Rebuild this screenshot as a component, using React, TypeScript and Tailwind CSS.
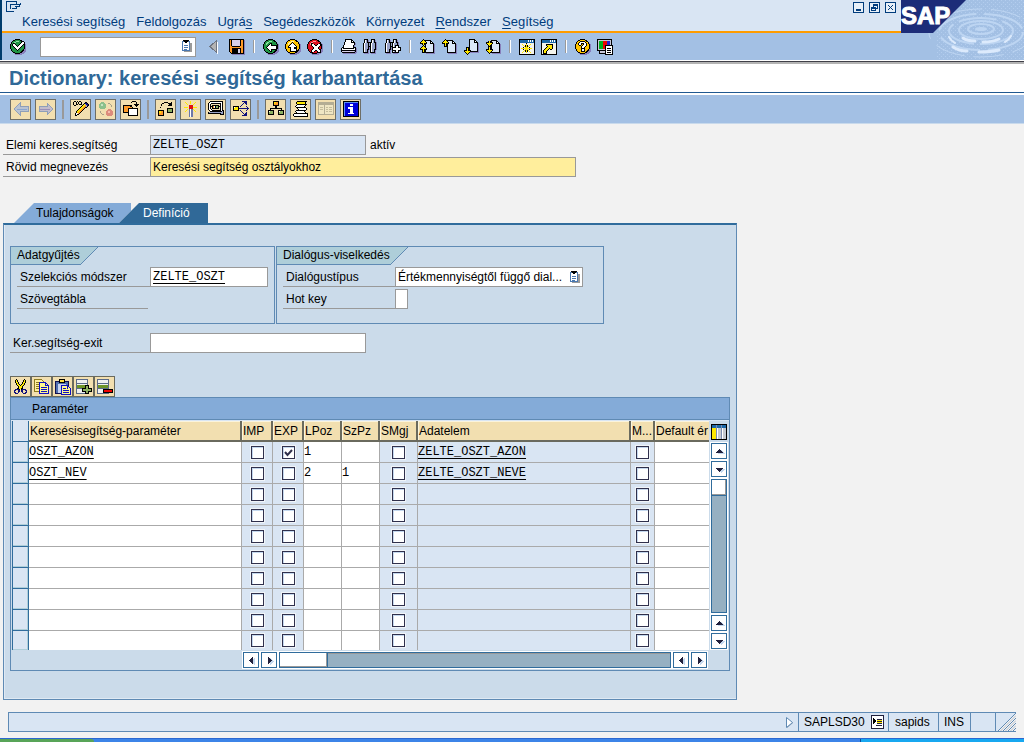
import React from 'react';
import { clsx } from 'clsx';

type IconProps = { children: React.ReactNode; size?: number };

const Icon = ({ children, size = 16 }: IconProps) => (
  <svg
    width={size}
    height={size}
    viewBox={`0 0 ${size} ${size}`}
    shapeRendering="crispEdges"
    fill="none"
    className="block shrink-0 overflow-visible"
    aria-hidden="true"
  >
    {children}
  </svg>
);

// one letter per pixel colour in the bitmaps below
const palette: Record<string, string> = {
  k: '#000000',
  w: '#ffffff',
  y: '#ffe800',
  o: '#ff9a28',
  g: '#8cb060',
  b: '#dce8f8',
  v: '#98a2c8',
  l: '#d8d0ea',
  p: '#8880bc',
  n: '#10107c',
};

const Pixels = ({ rows, x = 0, y = 0 }: { rows: string[]; x?: number; y?: number }) => (
  <>
    {rows.flatMap((row, r) =>
      [...row.matchAll(/([a-z])\1*/g)].map((run) => (
        <rect
          key={`${r}-${run.index}`}
          x={x + run.index}
          y={y + r}
          width={run[0].length}
          height={1}
          fill={palette[run[1]]}
        />
      )),
    )}
  </>
);

// Round glossy ball used by the enter / back / exit / cancel / help icons
const Ball = ({ fill, shine, children }: { fill: string; shine: string; children: React.ReactNode }) => (
  <Icon>
    <circle cx="9" cy="9" r="7.5" fill="#8880bc" />
    <circle cx="7.5" cy="7.5" r="7" fill={fill} stroke="#000" />
    <path d="M3 6V4h1V3h2V2h3v1H6v1H5v1H4v1z" fill={shine} />
    {children}
  </Icon>
);

const pageRows = [
  '......kkkkkk....',
  '......kbbbbkk...',
  '......kbbbbkwk..',
  '......kbbbbkkkk.',
  '......kbbbbbbbkp',
  '......kbbbbbbbkp',
  '......kbbbbbbbkp',
  '......kbbbbbbbkp',
  '......kbbbbbbbkp',
  '......kbbbbbbbkp',
  '......kbbbbbbbkp',
  '......kbbbbbbbkp',
  '......kkkkkkkkkp',
  '.......ppppppppp',
];

const upRows = ['...k...', '..kyk..', '.kyyyk.', 'kyyyyyk', 'kkkykkk', '..kyk..', '..kyk..', '..kkk..'];
const downRows = [...upRows].reverse();

const binocularRows = [
  '.kkkk...kkkk....',
  '.kwvkp..kwvkp...',
  '.kwvkp..kwvkp...',
  '.kwvkkkkkwvkkp..',
  'kwvvvkvkwvvvkp..',
  'kwvvvkvkwvvvkp..',
  'kwvvvkvkwvvvkp..',
  'kwvvvkkkwvvvkp..',
  'kwvvvkpkwvvvkp..',
  'kwvvvkpkwvvvkp..',
  'kwvvkkpkwvvkkp..',
  'kwvvkp.kwvvkp...',
  'kwvvkp.kwvvkp...',
  'kkkkkp.kkkkkp...',
  '.ppppp..ppppp...',
];

const Clipboard = () => (
  <svg width="10" height="12" viewBox="0 0 10 12" shapeRendering="crispEdges" className="block" aria-hidden="true">
    <path d="M2 3h8v9H2z" fill="#9a9a9a" />
    <path d="M.5 1.500h7v9h-7z" fill="#fff" stroke="#4a78b0" />
    <path d="M2 5h4v1H2zM2 7h4v1H2zM2 9h3v1H2z" fill="#4a78b0" />
    <path d="M1 0h6v1H6v1H5v1H3V2H2V1H1z" fill="#000" />
  </svg>
);

const ModeWindow = () => (
  <>
    <path d="M.5.5h15v15H.5z" fill="#f4f4ec" stroke="#000" />
    <path d="M1 1h14v3H1z" fill="#1c68a8" />
    <path d="M9 1h1v2H9zM11 1h1v2h-1zM13 1h1v2h-1z" fill="#fff" />
  </>
);

const icons = {
  enter: (
    <Ball fill="#1f9444" shine="#8be0a0">
      <Pixels
        x={2}
        y={2}
        rows={[
          '..........kk.',
          '.........kwwk',
          '.kk.....kwwwk',
          'kwwk...kwwwk.',
          'kwwwk.kwwwk..',
          '.kwwwkwwwk...',
          '..kwwwwwk....',
          '...kwwwk.....',
          '....kwk......',
          '.....k.......',
        ]}
      />
    </Ball>
  ),
  hideCommand: (
    <Icon>
      <path d="M13 2v13h-1V3z" fill="#fff" />
      <path d="M11.500 1.500v12L5 7.500z" fill="#b4b4b4" stroke="#6e7480" />
    </Icon>
  ),
  save: (
    <Icon>
      <Pixels
        rows={[
          'kkkkkkkkkkkkkkk.',
          'kokllllllllkookp',
          'kokllllllllkookp',
          'kokllllllllkookp',
          'kokllllllllkookp',
          'kokllllllllkookp',
          'kokllllllllkookp',
          'kookkkkkkkkoookp',
          'koooooooooooookp',
          'kookkkkkkkkkookp',
          'kookkkkkkllkookp',
          'kookkkkkkllkookp',
          'kookkkkkkllkookp',
          '.kokkkkkkllkookp',
          '..kkkkkkkkkkkkkp',
          '...ppppppppppppp',
        ]}
      />
    </Icon>
  ),
  back: (
    <Ball fill="#1f9444" shine="#8be0a0">
      <Pixels
        x={3}
        y={4}
        rows={[
          '....kk.......',
          '...kwk.......',
          '..kwwkkkkkk..',
          '.kwwwwwwwwk..',
          'kwwwwwwwwwk..',
          '.kwwwwwwwwk..',
          '..kwwkkkkkk..',
          '...kwk.......',
          '....kk.......',
        ]}
      />
    </Ball>
  ),
  exit: (
    <Ball fill="#ffc400" shine="#fff4a0">
      <Pixels
        x={3}
        y={3}
        rows={[
          '....k....',
          '...kwk...',
          '..kwwwk..',
          '.kwwwwwk.',
          'kwwwwwwwk',
          'kkkwwwkkk',
          '..kwwwkkk',
          '..kwwwwwk',
          '..kwwwwwk',
          '..kkkkkkk',
        ]}
      />
    </Ball>
  ),
  cancel: (
    <Ball fill="#e01020" shine="#ff9090">
      <Pixels
        x={4}
        y={4}
        rows={[
          'kk......kk',
          'kwwk..kwwk',
          'kwwwkkwwwk',
          '.kwwwwwwk.',
          '..kwwwwk..',
          '..kwwwwk..',
          '.kwwwwwwk.',
          'kwwwkkwwwk',
          'kwwk..kwwk',
          'kk......kk',
        ]}
      />
    </Ball>
  ),
  print: (
    <Icon>
      <Pixels
        rows={[
          '....kkkkkkk.....',
          '....kwwwwwkk....',
          '....kwwwwwkwk...',
          '...kwwwwwwkkkk..',
          '...kwwwwwwwwwkp.',
          '...kwwwwwwwwwkp.',
          '..kwwwwwwwwwkp..',
          '..kwwwwwwwwwkp..',
          '.kkwwwwwwwwwkkk.',
          'kbkkkkkkkkkkkbkp',
          'kwwwwwwwwwwwwwkp',
          'kkkkkkkkkkkkkkkp',
          'kllllllllllllvkp',
          '.kkkkkkkkkkkkkpp',
          '..ppppppppppppp.',
        ]}
      />
    </Icon>
  ),
  find: (
    <Icon>
      <Pixels rows={binocularRows} />
    </Icon>
  ),
  findNext: (
    <Icon>
      <Pixels rows={binocularRows} />
      <Pixels
        x={7}
        y={6}
        rows={['...kkkk..', '...kwwk..', 'kkkkwwkkk', 'kwwwwwwwk', 'kwwwwwwwk', 'kkkkwwkkk', '...kwwk..', '...kkkk..']}
      />
    </Icon>
  ),
  firstPage: (
    <Icon>
      <Pixels rows={pageRows} y={1} />
      <Pixels rows={upRows.slice(0, 6)} x={1} />
      <Pixels rows={upRows} x={1} y={6} />
    </Icon>
  ),
  prevPage: (
    <Icon>
      <Pixels rows={pageRows} y={1} />
      <Pixels rows={upRows} x={1} />
    </Icon>
  ),
  nextPage: (
    <Icon>
      <Pixels rows={pageRows} />
      <Pixels rows={downRows} x={1} y={8} />
    </Icon>
  ),
  lastPage: (
    <Icon>
      <Pixels rows={pageRows} y={1} />
      <Pixels rows={downRows.slice(2)} x={1} y={2} />
      <Pixels rows={downRows} x={1} y={7} />
    </Icon>
  ),
  newMode: (
    <Icon>
      <ModeWindow />
      <Pixels
        x={2}
        y={4}
        rows={[
          '.....k.....',
          '.y...y...y.',
          '..y.kyk.y..',
          '...ykyky...',
          '..k.yyy.k..',
          'yyyyyyyyyyy',
          '..k.yyy.k..',
          '...ykyky...',
          '..y.kyk.y..',
          '.y...y...y.',
        ]}
      />
    </Icon>
  ),
  shortcut: (
    <Icon>
      <ModeWindow />
      <Pixels
        x={1}
        y={5}
        rows={[
          '....kkkkkkk.',
          '....kyyyyyk.',
          '.....kyyyyk.',
          '....kyyyyyk.',
          '...kyyykyyk.',
          '..kyyyk.kk..',
          '.kyyyk......',
          '.kyyk.......',
          '.kyyk.......',
          '.kkkk.......',
        ]}
      />
    </Icon>
  ),
  help: (
    <Ball fill="#ffc400" shine="#fff4a0">
      <Pixels
        x={3}
        y={2}
        rows={[
          '..kkkkk..',
          '.kwwwwwk.',
          'kwwkkkwwk',
          'kwwk.kwwk',
          '.kk.kwwwk',
          '...kwwwk.',
          '...kwwk..',
          '...kkkk..',
          '...kwwk..',
          '...kwwk..',
          '...kkkk..',
        ]}
      />
    </Ball>
  ),
  layout: (
    <Icon>
      <path d="M.5.5h14v11H.5z" fill="#c8c8d8" stroke="#000" />
      <path d="M2 2h4v8H2z" fill="#00b020" />
      <path d="M6 2h4v8H6z" fill="#f00000" />
      <path d="M10 2h3v8h-3z" fill="#2020d0" />
      <path d="M2.500 11.500h8v3h-8z" fill="#c8c8d8" stroke="#000" />
      <path d="M8.500 6.500h7v9h-7z" fill="#fff" stroke="#000" />
      <path d="M10 9h4v1h-4zM10 11h4v1h-4zM10 13h4v1h-4z" fill="#000" />
    </Icon>
  ),
  left: (
    <Icon>
      <path d="M1 8l6-6v3h8v5H7v4z" fill="#b9c3d2" stroke="#8f9fb8" />
      <path d="M4 8.500h10" stroke="#8aa6d0" />
    </Icon>
  ),
  right: (
    <Icon>
      <path d="M15 8L9 2v3H1v5h8v4z" fill="#c3bccb" stroke="#8f9fb8" />
      <path d="M2 8.500h10" stroke="#9a8fb8" />
    </Icon>
  ),
  toggle: (
    <Icon>
      <Pixels
        rows={[
          '.kk.k.kk........',
          'k..k.k..k...kk..',
          'k..k.k..k..knnk.',
          'k..kk.kkk.kyvnnk',
          '.kk......kyyovnk',
          '........kyyoovk.',
          '.......kyyookk..',
          '......kyyook....',
          '.....kyyook.....',
          '....kyyook......',
          '...kyyook.......',
          '...kyook........',
          '..kwwok.........',
          '..kwkk..........',
          '..kk............',
        ]}
      />
    </Icon>
  ),
  activeInactive: (
    <Icon>
      <circle cx="4.500" cy="4.500" r="3.500" fill="#8cc08c" />
      <circle cx="11.500" cy="11.500" r="3.500" fill="#dc8c7c" />
      <path d="M2 10h1v2H2zM3 12h1v1H3zM4 13h2v1H4zM10 2h2v1h-2zM12 3h1v1h-1zM13 4h1v2h-1z" fill="#a8a088" />
      <path d="M3 3h2v2H3z" fill="#c4e4c0" />
      <path d="M10 10h2v2h-2z" fill="#f4bcac" />
    </Icon>
  ),
  otherObject: (
    <Icon>
      <Pixels
        rows={[
          '.........kkkk...',
          '........k....k..',
          '.............k..',
          '...........kkkkk',
          'kkkkkkkkk...kkk.',
          'kooooookk....k..',
          'kooooooook......',
          'kooookkkkkkkkkk.',
          'kooookwwwwwwwwk.',
          'kooookwwwwwwwwk.',
          'kooookwwwwwwwwk.',
          'kkkkkkwwwwwwwwk.',
          '.....kwwwwwwwwk.',
          '.....kwwwwwwwwk.',
          '.....kkkkkkkkkk.',
        ]}
      />
    </Icon>
  ),
  check: (
    <Icon>
      <Pixels
        y={1}
        rows={[
          '......kkkk...k..',
          '....kk....kkkk..',
          '...k.......kkk..',
          '...k......kkkk..',
          '................',
          '..k.............',
          '.........kkkkkk.',
          '.........kggggk.',
          'kkkkkk...kggggk.',
          'kyyook...kggggk.',
          'kyyook...kkkkkk.',
          'kooook..........',
          'kooook..........',
          'kkkkkk..........',
        ]}
      />
    </Icon>
  ),
  activate: (
    <Icon>
      <Pixels
        rows={[
          '.......y........',
          '..y....y....y...',
          '...y...y...y....',
          '....y.....y.....',
          '................',
          '................',
          '.yyyy.....yyyy..',
          '................',
          '....y.....y.....',
          '...y.......y....',
          '..y.........y...',
        ]}
      />
      <path d="M6 4h4v4H6z" fill="#e01010" />
      <path d="M6 8h4v8H6z" fill="#6c78a8" />
      <path d="M7 8h1v8H7z" fill="#fff" />
    </Icon>
  ),
  whereUsed: (
    <Icon>
      <Pixels
        rows={[
          '..kkkkkkkkkkkkk.',
          '.kwwwwwwwwwwwwk.',
          'kwwkkkkkkkkkkwk.',
          'kwk.........kwk.',
          'kwk.kkkkkkk.kwk.',
          'kwkkkowkggkkkwk.',
          'kwk.kowkggk.kwk.',
          'kwk.kkkkkkk.kwk.',
          'kwwk........kwk.',
          '.kwwkkkkkkkkkwkk',
          '..kkkkkkkkkkkkvk',
          'kvvvvvvvvvvvvvvk',
          'kkkkkkkkkkkkkvvk',
          '............kkkk',
        ]}
      />
    </Icon>
  ),
  display: (
    <Icon>
      <Pixels
        rows={[
          '.........nnnnn..',
          '...........nnn..',
          '..........n.nn..',
          '.........n...n..',
          '........n.......',
          'kkkkkk.n.....n..',
          'kwyyyk........n.',
          'kyyyyknnnnnnnnnn',
          'kyyyyk........n.',
          'kkkkkk.n.....n..',
          '........n.......',
          '.........n...n..',
          '..........n.nn..',
          '...........nnn..',
          '.........nnnnn..',
        ]}
      />
    </Icon>
  ),
  hierarchy: (
    <Icon>
      <Pixels
        rows={[
          '.....kkkkkk.....',
          '.....kyyook.....',
          '.....kyoook.....',
          '.....kooook.....',
          '.....kkkkkk.....',
          '.......kk.......',
          '.......kk.......',
          '..kkkkkkkkkkkk..',
          '..k..........k..',
          'kkkkkk....kkkkkk',
          'kwgggk....kwgggk',
          'kggggk....kggggk',
          'kggggk....kggggk',
          'kkkkkk....kkkkkk',
        ]}
      />
    </Icon>
  ),
  objectList: (
    <Icon>
      <Pixels
        rows={[
          '....kkkkkkkkkk..',
          '...kyyyyyyyyk...',
          '...kyyyyyyyyk...',
          '....kkkkkkkkkk..',
          '...kwwwwwwwwk...',
          '..kwwwwwwwwk....',
          '...kkkkkkkkkk...',
          '....kwwwwwwwwk..',
          '.....kwwwwwwwk..',
          '...kkkkkkkkkk...',
          '..kwwwwwwwwk....',
          '...kwwwwwwwwk...',
          '.kkkkkkkkkkkkkk.',
          'kwwwwwwwwwwwwwk.',
          'kwwwwwwwwwwwwwk.',
          '.kkkkkkkkkkkkkk.',
        ]}
      />
    </Icon>
  ),
  documentation: (
    <Icon>
      <path d="M.5 1.500h15v12H.5z" fill="#efe6c4" stroke="#b4ad94" />
      <path d="M1 2h14v2H1zM6 4h1v9H6z" fill="#b4ad94" />
      <path d="M2 6h3v1H2zM2 8h3v1H2zM8 6h2v1H8zM8 8h2v1H8zM8 10h2v1H8zM11 6h3v1h-3zM11 8h3v1h-3zM11 10h3v1h-3z" fill="#c4bc9c" />
    </Icon>
  ),
  info: (
    <Icon>
      <path d="M.5.5h15v15H.5z" fill="#0000d8" stroke="#000" />
      <path d="M1 1h14v1H1zM1 1h1v14H1z" fill="#6090f0" />
      <path d="M7 3h3v2H7zM5 6h5v6h1v1H5v-1h2V8H5z" fill="#fff" />
    </Icon>
  ),
  cut: (
    <Icon>
      <Pixels
        x={1}
        rows={[
          '..k.......k..',
          '.kyk.....kyk.',
          '.kyk.....kyk.',
          '.kyyk...kyyk.',
          '..kyk...kyk..',
          '..kyyk.kyyk..',
          '...kyykyyk...',
          '....kyyyk....',
          '....kyyyk....',
          '...kkyykk....',
          '.nnnnk.knnnn.',
          'nn..nn.nn..nn',
          'n...nn.nn...n',
          'nn..n...n..nn',
          '.nnn.....nnn.',
        ]}
      />
    </Icon>
  ),
  copy: (
    <Icon>
      <path d="M.5.5h7l2 2v10h-9z" fill="#fff0a0" stroke="#8c7a20" />
      <path d="M2 3h4v1H2zM2 5h3v1H2zM2 7h3v1H2zM2 9h3v1H2z" fill="#8c7a20" />
      <path d="M5.500 3.500h6l3 3v8h-9z" fill="#fff890" stroke="#1010c0" />
      <path d="M11 3h1v4h-1zM12 6h3v1h-3zM7 8h6v1H7zM7 10h6v1H7zM7 12h6v1H7z" fill="#1010c0" />
    </Icon>
  ),
  paste: (
    <Icon>
      <path d="M.5 2.500h13v12H.5z" fill="#5070b0" stroke="#101050" />
      <path d="M4.500.5h5v3h-5z" fill="#ffe040" stroke="#000" />
      <path d="M3 5h8v9H3z" fill="#c8d4f0" />
      <path d="M6.500 6.500h6l3 3v6h-9z" fill="#fff890" stroke="#1010c0" />
      <path d="M12 7h1v3h-1zM8 9h3v1H8zM8 11h6v1H8zM8 13h6v1H8z" fill="#1010c0" />
    </Icon>
  ),
  insertRow: (
    <Icon>
      <path d="M.5.5h11v4H.5zM.5 4.500h11v5H.5zM.5 9.500h11v5H.5z" fill="#f0f0f0" stroke="#5a6a88" />
      <path d="M1 6h10v3H1z" fill="#6c9428" />
      <Pixels
        x={6}
        y={6}
        rows={['...kkkk...', '...kggk...', '...kggk...', 'kkkkggkkkk', 'kggggggggk', 'kggggggggk', 'kkkkggkkkk', '...kggk...', '...kkkk...']}
      />
    </Icon>
  ),
  deleteRow: (
    <Icon>
      <path d="M.5.5h11v4H.5zM.5 4.500h11v5H.5zM.5 9.500h11v5H.5z" fill="#f0f0f0" stroke="#5a6a88" />
      <path d="M1 6h10v3H1z" fill="#6c9428" />
      <path d="M6.500 10.500h9v3h-9z" fill="#f00000" stroke="#000" />
    </Icon>
  ),
};

type IconName = keyof typeof icons;
type Tool = [IconName, string];

const menuItems: [string, string, string][] = [
  ['Keresési segítség', '', ''],
  ['Feldolgozás', '', ''],
  ['Ugrá', 's', ''],
  ['Segédeszközök', '', ''],
  ['Környezet', '', ''],
  ['', 'R', 'endszer'],
  ['', 'S', 'egítség'],
];

const systemTools: Tool[][] = [
  [['save', 'Mentés']],
  [['back', 'Vissza'], ['exit', 'Kilépés'], ['cancel', 'Megszakítás']],
  [['print', 'Nyomtatás'], ['find', 'Keresés'], ['findNext', 'Tovább keresés']],
  [['firstPage', 'Első oldal'], ['prevPage', 'Előző oldal'], ['nextPage', 'Következő oldal'], ['lastPage', 'Utolsó oldal']],
  [['newMode', 'Új mód'], ['shortcut', 'Parancsikon']],
  [['help', 'Súgó'], ['layout', 'Elrendezés']],
];

const appTools: Tool[][] = [
  [['left', 'Előző objektum'], ['right', 'Következő objektum']],
  [['toggle', 'Kijelzés/módosítás'], ['activeInactive', 'Aktív/inaktív'], ['otherObject', 'Másik objektum']],
  [['check', 'Ellenőrzés'], ['activate', 'Aktiválás'], ['whereUsed', 'Hol használt'], ['display', 'Teszt']],
  [['hierarchy', 'Hierarchia'], ['objectList', 'Objektumlista'], ['documentation', 'Dokumentáció'], ['info', 'Információ']],
];

const tableTools: Tool[] = [
  ['cut', 'Kivágás'],
  ['copy', 'Másolás'],
  ['paste', 'Beillesztés'],
  ['insertRow', 'Sor beszúrása'],
  ['deleteRow', 'Sor törlése'],
];

type Row = { name: string; exp: boolean; lpoz: string; szpz: string; element: string };

const emptyRow: Row = { name: '', exp: false, lpoz: '', szpz: '', element: '' };

const rows: Row[] = [
  { name: 'OSZT_AZON', exp: true, lpoz: '1', szpz: '', element: 'ZELTE_OSZT_AZON' },
  { name: 'OSZT_NEV', exp: false, lpoz: '2', szpz: '1', element: 'ZELTE_OSZT_NEVE' },
  ...Array.from({ length: 8 }, () => emptyRow),
];

const columns = ['Keresésisegítség-paraméter', 'IMP', 'EXP', 'LPoz', 'SzPz', 'SMgj', 'Adatelem', 'M...', 'Default ér'];

const mono = 'font-["Liberation_Mono",monospace]';

const SapLogo = () => (
  <svg width="123" height="60" viewBox="0 0 123 60" className="block shrink-0" role="img" aria-label="SAP">
    <defs>
      <pattern id="grain" width="4" height="4" patternUnits="userSpaceOnUse">
        <path d="M0 0h1v1H0zM2 2h1v1H2z" fill="#b3cdee" />
      </pattern>
    </defs>
    <rect width="123" height="60" fill="#a3c0e4" />
    <path d="M66 0h57v60H36V32z" fill="url(#grain)" />
    <g fill="none" stroke="#bdd5f2">
      <ellipse cx="80" cy="29" rx="5" ry="1" strokeWidth="2" />
      <ellipse cx="80" cy="29" rx="13" ry="5" strokeWidth="2" />
      <ellipse cx="80" cy="30" rx="22" ry="9" strokeWidth="2" />
      <ellipse cx="80" cy="31" rx="32" ry="13" strokeWidth="2" strokeDasharray="38 6" />
      <ellipse cx="80" cy="32" rx="42" ry="18" strokeWidth="2" strokeDasharray="42 8" />
      <ellipse cx="80" cy="33" rx="52" ry="24" strokeDasharray="30 9" />
    </g>
    <g fill="none" stroke="#dceafc" strokeLinecap="round">
      <path d="M62 38q4 3 12 3M82 42q10 0 16-3" strokeWidth="3" />
      <path d="M52 47q6 4 14 4M78 52q12 0 20-2" strokeWidth="3" />
      <path d="M48 37q2 4 6 6M110 36q-2 4-6 6" strokeWidth="2" />
    </g>
    <path d="M0 0h65L32 33H0z" fill="#1c2c78" />
    <text
      x="0"
      y="24"
      fill="#fff"
      stroke="#fff"
      strokeWidth="1"
      className='font-["Liberation_Sans",Arial,sans-serif] text-[24px] font-bold'
    >
      SAP
    </text>
  </svg>
);

const WindowButton = ({ label, children }: { label: string; children: React.ReactNode }) => (
  <button aria-label={label} className="size-[11px] border border-[#003c7c] bg-[#e8f0f8]">
    <svg width="9" height="9" viewBox="0 0 9 9" shapeRendering="crispEdges" fill="none" stroke="#003c7c" className="block">
      {children}
    </svg>
  </button>
);

const MenuBar = () => (
  <div className="flex h-[31px] items-start justify-between bg-[#d9e5f3] pl-1 pr-[5px]">
    <div>
      <svg width="16" height="13" viewBox="0 0 16 13" shapeRendering="crispEdges" fill="none" stroke="#003c7c" className="block">
        <path d="M8 11.500H.5v-10H10" />
        <path d="M4 4.500h10M14.500 3v2M13 6.500H9M10 8.500H6M4.500 4v5M13.500 5v2M10.500 7v2M10.500 1v3" />
      </svg>
      <nav className="flex h-[17px] items-center gap-[11px] pl-4 text-[13px] text-[#003c7c]">
        {menuItems.map(([before, key, after]) => (
          <button key={before + key + after} className="whitespace-nowrap">
            {before}
            <span className="underline underline-offset-2">{key}</span>
            {after}
          </button>
        ))}
      </nav>
    </div>
    <div className="flex gap-[5px] pt-0.5">
      <WindowButton label="Kis méret">
        <path d="M2 7h5" strokeWidth="2" />
      </WindowButton>
      <WindowButton label="Előző méret">
        <path d="M3.500 4V1.500h4v4H6" />
        <path d="M1.500 4.500h4v3h-4z" />
        <path d="M3 2h5M1 5h5" />
      </WindowButton>
      <WindowButton label="Bezárás">
        <path d="M2 2l5 5M7 2L2 7" />
      </WindowButton>
    </div>
  </div>
);

const FlatButton = ({ tool }: { tool: Tool }) => (
  <button aria-label={tool[1]} className="grid size-[22px] place-items-center">
    {icons[tool[0]]}
  </button>
);

const SystemToolbar = () => (
  <div className="flex h-[27px] items-center bg-[#a3c0e4] pl-[5px]">
    <FlatButton tool={['enter', 'Enter']} />
    <div className="relative ml-[11px] mr-[6px]">
      <input aria-label="Parancs" className="block h-5 w-[156px] border border-[#999] bg-white px-1 text-xs outline-none" />
      <button aria-label="Parancslista" className="absolute right-1 top-[3px]">
        <Clipboard />
      </button>
    </div>
    <FlatButton tool={['hideCommand', 'Parancsmező elrejtése']} />
    <div className="ml-0.5 flex">
      {systemTools.map((group, i) => (
        <div key={i} className="flex items-center">
          {i > 0 && <span className="mx-[5px] h-[13px] w-0.5 border-r border-white bg-[#999]" />}
          {group.map((tool) => (
            <FlatButton key={tool[0]} tool={tool} />
          ))}
        </div>
      ))}
    </div>
  </div>
);

const AppToolbar = () => (
  <div className="flex h-[29px] items-center border-b border-[#c9daec] bg-[#a3c0e4] pl-2.5">
    {appTools.map((group, i) => (
      <div key={i} className="flex items-center gap-1">
        {i > 0 && <span className="ml-[6px] mr-[2px] h-[19px] w-0.5 bg-[#999]" />}
        {group.map(([name, label]) => (
          <button
            key={name}
            aria-label={label}
            className="grid size-[21px] place-items-center border border-[#6e6e66] bg-[#f2dfb0]"
          >
            {icons[name]}
          </button>
        ))}
      </div>
    ))}
  </div>
);

const FormRow = ({
  id,
  label,
  labelClass,
  children,
}: {
  id?: string;
  label: string;
  labelClass: string;
  children?: React.ReactNode;
}) => (
  <div className="flex h-5">
    <label htmlFor={id} className={clsx('flex shrink-0 items-center border-b border-[#999] pl-[3px] whitespace-nowrap', labelClass)}>
      {label}
    </label>
    {children}
  </div>
);

const fieldBase = 'h-5 min-w-0 rounded-none border border-[#999] px-0.5 outline-none';

const Group = ({ title, className, children }: { title: string; className: string; children: React.ReactNode }) => (
  <section className={clsx('h-[78px] border border-[#5f8ab4]', className)}>
    <h2 className="flex h-[18px]">
      <span className="border-b border-[#5f8ab4] bg-[#aeced9] pl-[6px] leading-4">{title}</span>
      <svg width="18" height="18" viewBox="0 0 18 18" className="block" aria-hidden="true">
        <path d="M0 0h18L0 18z" fill="#aeced9" />
        <path d="M18 0L0 18" stroke="#5f8ab4" />
      </svg>
    </h2>
    <div className="mt-0.5 flex flex-col gap-0.5 pl-[6px]">{children}</div>
  </section>
);

const CheckBox = ({ label, checked = false }: { label: string; checked?: boolean }) => (
  <span className="grid place-items-center">
    <input
      type="checkbox"
      aria-label={label}
      defaultChecked={checked}
      className="peer col-start-1 row-start-1 size-[13px] appearance-none border border-[#30304c] bg-white outline outline-[#f0f4f8] shadow-[inset_1px_1px_0_#c4d8ee]"
    />
    <svg
      width="9"
      height="9"
      viewBox="0 0 9 9"
      className="pointer-events-none invisible col-start-1 row-start-1 peer-checked:visible"
      aria-hidden="true"
    >
      <path d="M1 4l2.500 3L8 2" fill="none" stroke="#30304c" strokeWidth="2" />
    </svg>
  </span>
);

const arrows = {
  up: 'M6 4h1v1h1v1h1v1h1v1H3V7h1V6h1V5h1z',
  down: 'M3 5h7v1H9v1H8v1H7v1H6V8H5V7H4V6H3z',
  left: 'M8 3v7H7V9H6V8H5V7H4V6h1V5h1V4h1V3z',
  right: 'M5 3v7h1V9h1V8h1V7h1V6H8V5H7V4H6V3z',
};

const ScrollButton = ({ dir, label }: { dir: keyof typeof arrows; label: string }) => (
  <button aria-label={label} className="grid size-[18px] shrink-0 place-items-center border border-white bg-white">
    <span className="grid size-4 place-items-center border border-[#306c9c]">
      <svg width="13" height="13" viewBox="0 0 13 13" shapeRendering="crispEdges" className="block">
        <path d={arrows[dir]} fill="#c4d8ee" transform="translate(2 1)" />
        <path d={arrows[dir]} fill="#20203c" />
      </svg>
    </span>
  </button>
);

const cell = 'border-b border-r border-[#aaa] p-0 align-middle';

const ParameterTable = () => (
  <div className="max-w-[720px] border border-[#5f8ab4] bg-[#cbdbea]">
    <div className="flex h-[22px] items-center border-b border-[#5f8ab4] bg-[#84abd8] pl-[21px]">Paraméter</div>
    <div className="flex border-t border-[#d9e5f3] pl-px">
      <div className="min-w-0 flex-1 overflow-hidden">
        <table className="w-full table-fixed border-separate border-spacing-0">
          <colgroup>
            <col className="w-[17px]" />
            <col className="w-[213px]" />
            <col className="w-[31px]" />
            <col className="w-[31px]" />
            <col className="w-[38px]" />
            <col className="w-[38px]" />
            <col className="w-[38px]" />
            <col className="w-[213px]" />
            <col className="w-[24px]" />
            <col />
          </colgroup>
          <thead>
            <tr className="h-[21px]">
              <th className="border-x border-b border-[#306c9c] bg-[#d9e5f3] p-0" aria-label="Kijelölés" />
              {columns.map((name) => (
                <th
                  key={name}
                  className="overflow-hidden border-b-2 border-r-2 border-[#6a6a5e] bg-[#f2dfb0] p-0 pl-px text-left font-normal whitespace-nowrap shadow-[inset_1px_1px_0_#fbf4dc] last:border-r-0"
                >
                  {name}
                </th>
              ))}
            </tr>
          </thead>
          <tbody>
            {rows.map((row, i) => (
              <tr key={i} className="group h-[21px] last:h-[19px]">
                <td className="border-x border-b border-[#306c9c] bg-[#d9e5f3] p-0 shadow-[inset_-1px_-1px_0_#aeced9] group-last:border-b-0" />
                {[row.name, null, null, row.lpoz, row.szpz, null, row.element, null, ''].map((value, c) => (
                  <td
                    key={c}
                    className={clsx(
                      cell,
                      'group-last:border-b-0 last:border-r-0',
                      value === null || c === 6 ? 'bg-[#d9e5f3]' : 'bg-white',
                    )}
                  >
                    {value === null && <CheckBox label={`${columns[c]} ${i + 1}`} checked={c === 2 && row.exp} />}
                    {c === 6 && (
                      <span className={clsx(mono, 'block leading-4 underline underline-offset-[3px]')}>{value}</span>
                    )}
                    {value !== null && c !== 6 && (
                      <input
                        aria-label={`${columns[c]} ${i + 1}`}
                        defaultValue={value}
                        className={clsx(
                          mono,
                          'block h-[18px] w-full bg-transparent outline-none',
                          c === 0 && 'underline underline-offset-[3px]',
                        )}
                      />
                    )}
                  </td>
                ))}
              </tr>
            ))}
          </tbody>
        </table>
      </div>
      <div className="flex w-5 flex-col items-center">
        <button aria-label="Konfiguráció" className="grid h-[21px] w-[18px] place-items-center">
          <Icon>
            <path d="M.5.5h15v15H.5z" fill="#fff" stroke="#000" />
            <path d="M1 1h14v3H1z" fill="#1c68a8" />
            <path d="M1 4h4v11H1z" fill="#ffe800" />
            <path d="M7 4h3v11H7zM12 4h3v11h-3z" fill="#c4c8d0" />
            <path d="M5 1h1v14H5zM10 1h1v14h-1z" fill="#7c8cb0" />
          </Icon>
        </button>
        <ScrollButton dir="up" label="Fel" />
        <ScrollButton dir="down" label="Le" />
        <div className="flex w-[18px] flex-1 border border-white">
          <div className="flex-1 border border-[#306c9c] bg-[#96b0c2]">
            <div className="h-4 border-b border-[#306c9c] bg-white shadow-[inset_-1px_-1px_0_#999]" />
          </div>
        </div>
        <ScrollButton dir="up" label="Sorral fel" />
        <ScrollButton dir="down" label="Sorral le" />
      </div>
    </div>
    <div className="my-px ml-[231px] mr-[21px] flex">
      <ScrollButton dir="left" label="Balra" />
      <ScrollButton dir="right" label="Jobbra" />
      <div className="flex h-[18px] flex-1 border border-white">
        <div className="flex-1 border border-[#306c9c] bg-[#96b0c2] shadow-[inset_0_1px_0_#999]">
          <div className="h-full w-12 border-r border-[#306c9c] bg-white shadow-[inset_-1px_-1px_0_#999]" />
        </div>
      </div>
      <ScrollButton dir="left" label="Oszloppal balra" />
      <ScrollButton dir="right" label="Oszloppal jobbra" />
    </div>
  </div>
);

const Tabs = () => (
  <div role="tablist" className="flex h-5 pl-[11px]">
    <button
      role="tab"
      aria-selected="false"
      className="h-5 w-[124px] bg-[#84abd8] pl-[22px] text-left [clip-path:polygon(20px_0,117px_0,117px_8px,105px_100%,0_100%)]"
    >
      Tulajdonságok
    </button>
    <button
      role="tab"
      aria-selected="true"
      className="-ml-[19px] h-5 w-[89px] bg-[#306998] pl-6 text-left text-white [clip-path:polygon(20px_0,100%_0,100%_100%,0_100%)]"
    >
      Definíció
    </button>
  </div>
);

const DefinitionPanel = () => (
  <div
    role="tabpanel"
    className="border border-t-2 border-[#5f8ab4] border-t-[#306c9c] bg-[#cbdbea] px-[6px] pb-[28px] pt-[21px] shadow-[inset_1px_-1px_0_#dfe9f3]"
  >
    <div className="flex gap-px">
      <Group title="Adatgyűjtés" className="w-[265px]">
        <FormRow id="method" label="Szelekciós módszer" labelClass="w-[133px]">
          <input
            id="method"
            defaultValue="ZELTE_OSZT"
            className={clsx(fieldBase, mono, 'w-[118px] bg-white underline underline-offset-[3px]')}
          />
        </FormRow>
        <FormRow label="Szövegtábla" labelClass="w-[131px]" />
      </Group>
      <Group title="Dialógus-viselkedés" className="w-[328px]">
        <FormRow id="dialog" label="Dialógustípus" labelClass="w-[112px]">
          <div className="relative">
            <select id="dialog" className={clsx(fieldBase, 'block w-[188px] appearance-none bg-white')}>
              <option>Értékmennyiségtől függő dial...</option>
            </select>
            <span className="pointer-events-none absolute right-[3px] top-1">
              <Clipboard />
            </span>
          </div>
        </FormRow>
        <FormRow id="hotkey" label="Hot key" labelClass="w-[112px]">
          <input id="hotkey" className={clsx(fieldBase, 'w-[13px] bg-white')} />
        </FormRow>
      </Group>
    </div>
    <div className="mb-[23px] mt-[9px]">
      <FormRow id="exit" label="Ker.segítség-exit" labelClass="w-[140px]">
        <input id="exit" className={clsx(fieldBase, 'w-[216px] bg-white')} />
      </FormRow>
    </div>
    <div className="flex">
      {tableTools.map(([name, label]) => (
        <button
          key={name}
          aria-label={label}
          className="grid size-[21px] place-items-center border border-[#6a6a5e] bg-[#f2dfb0]"
        >
          {icons[name]}
        </button>
      ))}
    </div>
    <ParameterTable />
  </div>
);

const StatusBar = () => (
  <footer className="mx-2 mb-[6px] mt-3 flex h-5 border border-r-0 border-[#5f8ab4] bg-[#d9e5f3]">
    <div className="flex flex-1 items-center justify-end pr-1">
      <svg width="9" height="13" viewBox="0 0 9 13" className="block" aria-hidden="true">
        <path d="M2 2v10l6-5z" fill="#8c9cb0" />
        <path d="M1.500 1.500v10l6-5z" fill="#fff" stroke="#5f8ab4" />
      </svg>
    </div>
    <div className="flex w-[90px] items-center justify-between border-l border-[#5f8ab4] pl-[5px] pr-1">
      SAPLSD30
      <svg width="13" height="14" viewBox="0 0 13 14" shapeRendering="crispEdges" fill="none" className="block" aria-hidden="true">
        <path d="M.5.500h12v13H.5z" fill="#fff" stroke="#20203c" />
        <path d="M6 4h5v5H6z" fill="#ffe800" />
        <path d="M6 4.500h5M6 6.500h5M6 8.500h5M5 10.500h6" stroke="#20203c" />
        <path d="M2 3h1v6H2zM3 4h1v4H3zM4 5h1v2H4z" fill="#000" />
      </svg>
    </div>
    <div className="flex w-[50px] items-center border-l border-[#5f8ab4] pl-[6px]">sapids</div>
    <div className="flex w-8 items-center border-l border-[#5f8ab4] pl-[5px]">INS</div>
    <div className="w-[25px] border-l border-[#5f8ab4]" />
    <div className="w-[21px] border-l border-[#5f8ab4]">
      <svg width="20" height="18" viewBox="0 0 20 18" className="block" aria-hidden="true">
        <path d="M20 0v18H2z" fill="#f2f2f2" />
        <path d="M2 18L20 0M7 18L20 5M12 18l8-8M17 18l3-3" stroke="#5f8ab4" />
        <path d="M4.500 18L20 2.500M9.500 18L20 7.500M14.500 18l5.500-5.500" stroke="#b4bcc8" />
      </svg>
    </div>
  </footer>
);

const App = () => {
  return (
    <div className='flex min-h-screen flex-col bg-[#f2f2f2] font-["Liberation_Sans",Arial,sans-serif] text-xs text-black'>
      <header>
        <div className="flex border-l-2 border-[#003c6c]">
          <div className="min-w-0 flex-1">
            <MenuBar />
            <div className="h-0.5 bg-[#ff9c00]" />
            <SystemToolbar />
          </div>
          <SapLogo />
        </div>
        <div className="h-1 border-b-2 border-t border-b-[#b4b4b4] border-t-white bg-[#404048]" />
        <h1 className="flex h-7 items-center bg-white pl-[9px] text-[20px] font-bold text-[#306998]">
          Dictionary: keresési segítség karbantartása
        </h1>
        <div className="h-[3px] border-t border-[#205890] bg-white" />
        <AppToolbar />
      </header>

      <main className="flex-1">
        <form className="flex flex-col gap-0.5 pl-[3px] pt-[11px]">
          <FormRow id="help" label="Elemi keres.segítség" labelClass="w-[147px]">
            <input
              id="help"
              readOnly
              defaultValue="ZELTE_OSZT"
              className={clsx(fieldBase, mono, 'w-[216px] bg-[#d9e5f3]')}
            />
            <span className="flex items-center pl-1">aktív</span>
          </FormRow>
          <FormRow id="short" label="Rövid megnevezés" labelClass="w-[147px]">
            <input
              id="short"
              defaultValue="Keresési segítség osztályokhoz"
              className={clsx(fieldBase, 'w-[426px] bg-[#ffee9c]')}
            />
          </FormRow>
        </form>
        <div className="ml-[3px] mt-[26px] max-w-[734px]">
          <Tabs />
          <DefinitionPanel />
        </div>
      </main>

      <StatusBar />
      <div className="flex h-1 border-t border-[#2c68d0] bg-[#3c84e8]">
        <div className="w-[94px] rounded-tr-sm bg-[#58a458]" />
        <div className="flex-1" />
        <div className="w-[164px] border-l border-[#0c4c9c] bg-[#18a8f0]" />
      </div>
    </div>
  );
};

export default App;
